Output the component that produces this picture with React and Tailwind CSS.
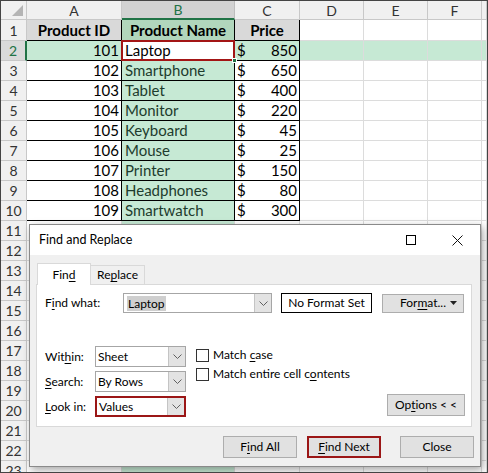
import React from 'react';

const products = [
  [101, 'Laptop', 850],
  [102, 'Smartphone', 650],
  [103, 'Tablet', 400],
  [104, 'Monitor', 220],
  [105, 'Keyboard', 45],
  [106, 'Mouse', 25],
  [107, 'Printer', 150],
  [108, 'Headphones', 80],
  [109, 'Smartwatch', 300],
];

const cols = ['A', 'B', 'C', 'D', 'E', 'F', 'G'];
const rows = Array.from({ length: 23 }, (_, i) => i + 1);

const Chevron = () => (
  <svg width="9" height="5" viewBox="0 0 9 5" fill="none">
    <path d="M0.5 0.5L4.5 4.5L8.5 0.5" stroke="#606060" strokeWidth="1" />
  </svg>
);

const U = ({ children }) => <span className="underline underline-offset-2">{children}</span>;

function ColHeader({ c }) {
  if (c === 'B') {
    return (
      <div className="flex items-center justify-center bg-[#d2d2d2] border-r border-[#bdbdbd] border-b-2 border-b-[#217346] text-[#217346] text-[14px]">
        B
      </div>
    );
  }
  return (
    <div className="flex items-center justify-center bg-[#f0f0f0] border-r border-b border-[#c8c8c8] text-[#333] text-[14px]">
      {c === 'G' ? '' : c}
    </div>
  );
}

function RowHeader({ r }) {
  if (r === 2) {
    return (
      <div className="flex items-center justify-center bg-[#dadada] border-b border-[#c8c8c8] border-r-2 border-r-[#217346] text-[#217346] text-[14px]">
        2
      </div>
    );
  }
  return (
    <div className="flex items-center justify-center bg-[#f0f0f0] border-r border-b border-[#c8c8c8] text-[#333] text-[14px]">
      {r}
    </div>
  );
}

function Cell({ r, c }) {
  const inTable = r <= 10 && (c === 'A' || c === 'B' || c === 'C');
  const p = r >= 2 && r <= 10 ? products[r - 2] : null;

  if (r === 2 && c === 'B') {
    return (
      <div className="relative bg-white border-2 border-[#a31515] -ml-px -mt-px flex items-center pl-[2px] text-black">
        Laptop
        <span className="absolute -right-[4px] -bottom-[4px] w-[5px] h-[5px] bg-[#217346] border border-white" />
      </div>
    );
  }

  let bg = 'bg-white';
  if (r === 1 && inTable) bg = c === 'B' ? 'bg-[#b1d6bc]' : 'bg-[#d9d9d9]';
  else if (c === 'B' || r === 2) bg = 'bg-[#c6e9d4]';

  const border = inTable ? 'border-r border-b border-black' : 'border-r border-b border-[#dcdcdc]';

  if (r === 1 && inTable) {
    const label = { A: 'Product ID', B: 'Product Name', C: 'Price' }[c];
    return (
      <div className={`${bg} ${border} flex items-center justify-center font-bold text-black`}>{label}</div>
    );
  }
  if (p && c === 'A') {
    return <div className={`${bg} ${border} flex items-center justify-end pr-[2px] text-black`}>{p[0]}</div>;
  }
  if (p && c === 'B') {
    return <div className={`${bg} ${border} flex items-center pl-[3px] text-[#1d3b2d]`}>{p[1]}</div>;
  }
  if (p && c === 'C') {
    return (
      <div className={`${bg} ${border} flex items-center justify-between px-[2px] text-black`}>
        <span>$</span>
        <span>{p[2]}</span>
      </div>
    );
  }
  return <div className={`${bg} ${border}`} />;
}

function Select({ value, red }) {
  return (
    <div
      className={`flex w-[91px] h-[21px] bg-white ${
        red ? 'border-2 border-[#9b1616]' : 'border border-[#a6a6a6]'
      }`}
    >
      <span className="flex-1 flex items-center pl-[2px]">{value}</span>
      <span className="w-[17px] flex items-center justify-center bg-[#e3e3e3] border-l border-[#c4c4c4]">
        <Chevron />
      </span>
    </div>
  );
}

function Button({ children, red }) {
  return (
    <div
      className={`w-[74px] h-[22px] flex items-center justify-center bg-[#e1e1e1] ${
        red ? 'border-2 border-[#9b1616]' : 'border border-[#adadad]'
      }`}
    >
      {children}
    </div>
  );
}

function Dialog() {
  return (
    <div className="absolute left-[28px] top-[223px] w-[452px] h-[243px] border border-[#8a8a8a] bg-[#f0f0f0] shadow-[2px_3px_8px_rgba(0,0,0,0.35)] flex flex-col font-['Lato',sans-serif] text-[12px] text-black">
      {/* title bar */}
      <div className="h-[30px] bg-white flex items-center">
        <span className="pl-[9px] text-[12.5px]">Find and Replace</span>
        <div className="ml-auto flex h-full">
          <div className="w-[46px] flex items-center justify-center">
            <span className="w-[10px] h-[10px] border border-black" />
          </div>
          <div className="w-[46px] flex items-center justify-center">
            <svg width="11" height="11" viewBox="0 0 11 11">
              <path d="M0.5 0.5L10.5 10.5M10.5 0.5L0.5 10.5" stroke="#111" strokeWidth="1" />
            </svg>
          </div>
        </div>
      </div>

      <div className="flex-1 flex flex-col pl-[6px] pr-[8px] pt-[8px]">
        {/* tabs */}
        <div className="flex items-end h-[21px] pl-px">
          <div className="relative z-10 w-[54px] h-[22px] -mb-px bg-white border border-b-0 border-[#d9d9d9] flex items-center justify-center">
            Fin<U>d</U>
          </div>
          <div className="w-[54px] h-[19px] border border-l-0 border-b-0 border-[#d9d9d9] flex items-center justify-center">
            Re<U>p</U>lace
          </div>
        </div>

        {/* panel */}
        <div className="h-[143px] bg-white border border-[#d9d9d9] pl-[8px] pr-[6px] pt-[8px] flex flex-col">
          <div className="flex items-center h-[20px]">
            <span className="w-[78px]">
              F<U>i</U>nd what:
            </span>
            <div className="flex w-[149px] h-[20px] border border-[#a6a6a6]">
              <span className="flex-1 flex items-center pl-[3px]">
                <span className="bg-[#cfcfcf] px-px leading-[15px]">Laptop</span>
              </span>
              <span className="w-[17px] flex items-center justify-center bg-[#e3e3e3] border-l border-[#c4c4c4]">
                <Chevron />
              </span>
            </div>
            <div className="ml-[9px] w-[91px] h-[20px] border border-black flex items-center justify-center">
              No Format Set
            </div>
            <div className="ml-[10px] w-[82px] h-[19px] bg-[#e1e1e1] border border-[#adadad] flex items-center pl-[17px] pr-[6px]">
              <span>
                For<U>m</U>at...
              </span>
              <svg className="ml-auto" width="7" height="4" viewBox="0 0 7 4">
                <path d="M0 0H7L3.5 4Z" fill="#222" />
              </svg>
            </div>
          </div>

          <div className="flex items-end mt-[33px]">
            <div className="flex flex-col gap-[4px]">
              <div className="flex items-center">
                <span className="w-[50px]">
                  Wit<U>h</U>in:
                </span>
                <Select value="Sheet" />
              </div>
              <div className="flex items-center">
                <span className="w-[50px]">
                  <U>S</U>earch:
                </span>
                <Select value="By Rows" />
              </div>
              <div className="flex items-center">
                <span className="w-[50px]">
                  <U>L</U>ook in:
                </span>
                <Select value="Values" red />
              </div>
            </div>

            <div className="self-start ml-[10px] flex flex-col gap-[1px]">
              <div className="flex items-center gap-[4px] h-[18px]">
                <span className="w-[13px] h-[13px] border border-[#333] bg-white" />
                <span>
                  Match <U>c</U>ase
                </span>
              </div>
              <div className="flex items-center gap-[4px] h-[18px]">
                <span className="w-[13px] h-[13px] border border-[#333] bg-white" />
                <span>
                  Match entire cell c<U>o</U>ntents
                </span>
              </div>
            </div>

            <div className="ml-auto mb-px w-[78px] h-[22px] bg-[#e1e1e1] border border-[#adadad] flex items-center justify-center">
              Op<U>t</U>ions &lt; &lt;
            </div>
          </div>
        </div>

        {/* bottom buttons */}
        <div className="flex justify-end mt-[9px] mr-[-2px]">
          <Button>
            F<U>i</U>nd All
          </Button>
          <div className="ml-[10px]">
            <Button red>
              <U>F</U>ind Next
            </Button>
          </div>
          <div className="ml-[19px]">
            <Button>Close</Button>
          </div>
        </div>
      </div>
    </div>
  );
}

export default function App() {
  return (
    <div className="relative w-[488px] h-[473px] overflow-hidden border border-[#444] bg-white font-['Lato',sans-serif] text-[15px]">
      <div className="grid grid-cols-[26px_95px_113px_65px_64px_64px_54px_1fr] grid-rows-[19px_21px_repeat(22,20px)]">
        {/* corner */}
        <div className="relative bg-[#f0f0f0] border-r border-b border-[#c8c8c8]">
          <svg className="absolute right-[3px] bottom-[3px]" width="11" height="11" viewBox="0 0 11 11">
            <path d="M11 0V11H0Z" fill="#b4b4b4" />
          </svg>
        </div>
        {cols.map((c) => (
          <ColHeader key={c} c={c} />
        ))}
        {rows.map((r) => (
          <React.Fragment key={r}>
            <RowHeader r={r} />
            {cols.map((c) => (
              <Cell key={c} r={r} c={c} />
            ))}
          </React.Fragment>
        ))}
      </div>
      <Dialog />
    </div>
  );
}
